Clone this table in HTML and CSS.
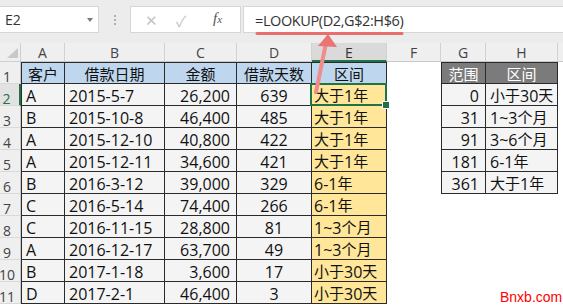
FILE: index.html
```html
<!DOCTYPE html>
<html lang="zh">
<head>
<meta charset="utf-8">
<title>LOOKUP</title>
<link rel="stylesheet" href="styles.css">
</head>
<body>
<div class="app">
  <div class="toolbar">
    <div class="namebox"><span class="nb-text">E2</span><span class="nb-arrow"></span></div>
    <div class="dots"><i></i><i></i><i></i></div>
    <div class="fxbox"><span class="fx-x">✕</span><span class="fx-ok">✓</span><span class="fx-fx"><i>f</i><i class="sub">x</i></span></div>
    <div class="formula">=LOOKUP(D2,G$2:H$6)</div>
  </div>

  <div class="sheet">
    <div class="corner"><span class="tri"></span></div>
    <div class="ch">A</div><div class="ch">B</div><div class="ch">C</div><div class="ch">D</div><div class="ch ch-sel">E</div><div class="ch">F</div><div class="ch">G</div><div class="ch">H</div><div class="ch ch-last"></div>

    <div class="rh">1</div>
    <div class="c hd first"><span class="z">客户</span></div>
    <div class="c hd"><span class="z">借款日期</span></div>
    <div class="c hd"><span class="z">金额</span></div>
    <div class="c hd"><span class="z">借款天数</span></div>
    <div class="c hd"><span class="z">区间</span></div>
    <div class="e"></div>
    <div class="c hd2 first"><span class="z">范围</span></div>
    <div class="c hd2"><span class="z">区间</span></div>
    <div class="e"></div>

    <div class="rh rh-sel">2</div>
    <div class="c d l first">A</div><div class="c d l">2015-5-7</div><div class="c d r">26,200</div><div class="c d m">639</div>
    <div class="c y sel"><span class="z">大于</span>1<span class="z">年</span></div>
    <div class="e"></div>
    <div class="c d r first">0</div><div class="c d l"><span class="z">小于</span>30<span class="z">天</span></div>
    <div class="e"></div>

    <div class="rh">3</div>
    <div class="c d l first">B</div><div class="c d l">2015-10-8</div><div class="c d r">46,400</div><div class="c d m">485</div>
    <div class="c y"><span class="z">大于</span>1<span class="z">年</span></div>
    <div class="e"></div>
    <div class="c d r first">31</div><div class="c d l">1~3<span class="z">个月</span></div>
    <div class="e"></div>

    <div class="rh">4</div>
    <div class="c d l first">A</div><div class="c d l">2015-12-10</div><div class="c d r">40,800</div><div class="c d m">422</div>
    <div class="c y"><span class="z">大于</span>1<span class="z">年</span></div>
    <div class="e"></div>
    <div class="c d r first">91</div><div class="c d l">3~6<span class="z">个月</span></div>
    <div class="e"></div>

    <div class="rh">5</div>
    <div class="c d l first">A</div><div class="c d l">2015-12-11</div><div class="c d r">34,600</div><div class="c d m">421</div>
    <div class="c y"><span class="z">大于</span>1<span class="z">年</span></div>
    <div class="e"></div>
    <div class="c d r first">181</div><div class="c d l">6-1<span class="z">年</span></div>
    <div class="e"></div>

    <div class="rh">6</div>
    <div class="c d l first">B</div><div class="c d l">2016-3-12</div><div class="c d r">39,000</div><div class="c d m">329</div>
    <div class="c y">6-1<span class="z">年</span></div>
    <div class="e"></div>
    <div class="c d r first">361</div><div class="c d l"><span class="z">大于</span>1<span class="z">年</span></div>
    <div class="e"></div>

    <div class="rh">7</div>
    <div class="c d l first">C</div><div class="c d l">2016-5-14</div><div class="c d r">74,400</div><div class="c d m">266</div>
    <div class="c y">6-1<span class="z">年</span></div>
    <div class="e"></div><div class="e"></div><div class="e"></div><div class="e"></div>

    <div class="rh">8</div>
    <div class="c d l first">C</div><div class="c d l">2016-11-15</div><div class="c d r">28,800</div><div class="c d m">81</div>
    <div class="c y">1~3<span class="z">个月</span></div>
    <div class="e"></div><div class="e"></div><div class="e"></div><div class="e"></div>

    <div class="rh">9</div>
    <div class="c d l first">A</div><div class="c d l">2016-12-17</div><div class="c d r">63,700</div><div class="c d m">49</div>
    <div class="c y">1~3<span class="z">个月</span></div>
    <div class="e"></div><div class="e"></div><div class="e"></div><div class="e"></div>

    <div class="rh">10</div>
    <div class="c d l first">B</div><div class="c d l">2017-1-18</div><div class="c d r">3,600</div><div class="c d m">17</div>
    <div class="c y"><span class="z">小于</span>30<span class="z">天</span></div>
    <div class="e"></div><div class="e"></div><div class="e"></div><div class="e"></div>

    <div class="rh">11</div>
    <div class="c d l first">D</div><div class="c d l">2017-2-1</div><div class="c d r">46,400</div><div class="c d m">3</div>
    <div class="c y"><span class="z">小于</span>30<span class="z">天</span></div>
    <div class="e"></div><div class="e"></div><div class="e"></div><div class="e"></div>
  </div>

  <svg class="annot" width="563" height="307" viewBox="0 0 563 307">
    <defs>
      <filter id="blur" x="-20%" y="-300%" width="140%" height="700%">
        <feGaussianBlur stdDeviation="2"/>
      </filter>
    </defs>
    <line x1="262" y1="39" x2="400" y2="39" stroke="#777" stroke-width="3" filter="url(#blur)" opacity="0.7"/>
    <line x1="257" y1="33.5" x2="402" y2="33.5" stroke="#e96f6f" stroke-width="3" stroke-linecap="round"/>
    <line x1="326" y1="43" x2="316" y2="92" stroke="#ef8c8c" stroke-width="4" stroke-linecap="round"/>
    <polygon points="328,34 318,46 337,47" fill="#ea7474"/>
  </svg>
  <div class="watermark">Bnxb.com</div>
</div>
</body>
</html>
```

FILE: styles.css
```css
* { box-sizing: border-box; }
html, body { margin: 0; padding: 0; }
body {
  width: 563px;
  height: 307px;
  overflow: hidden;
  background: #ffffff;
  font-family: "Open Sans", "Noto Sans CJK SC", sans-serif;
}
.app {
  position: relative;
  width: 563px;
  height: 307px;
}

/* ---------- formula toolbar ---------- */
.toolbar {
  display: flex;
  align-items: flex-start;
  height: 43px;
  padding-top: 6px;
  background: #ececec;
}
.namebox {
  position: relative;
  width: 99px;
  height: 27px;
  background: #fff;
  border: 1px solid #d6d6d6;
  border-left: none;
  display: flex;
  align-items: center;
  padding-left: 5px;
}
.nb-text {
  font-size: 14px;
  color: #333;
}
.nb-arrow {
  position: absolute;
  left: 87px;
  top: 11px;
  width: 0;
  height: 0;
  border-left: 3.5px solid transparent;
  border-right: 3.5px solid transparent;
  border-top: 4px solid #7a7a7a;
}
.dots {
  width: 31px;
  height: 27px;
  display: flex;
  flex-direction: column;
  align-items: center;
  justify-content: center;
  gap: 2px;
}
.dots i {
  display: block;
  width: 2px;
  height: 2px;
  background: #b0b0b0;
}
.fxbox {
  width: 111px;
  height: 27px;
  background: #fff;
  border: 1px solid #d6d6d6;
  display: flex;
  align-items: center;
  position: relative;
}
.fx-x {
  position: absolute;
  left: 14px;
  top: 3px;
  font-size: 15px;
  color: #c4c4c4;
}
.fx-ok {
  position: absolute;
  left: 45px;
  top: 3px;
  font-size: 15px;
  color: #c4c4c4;
}
.fx-fx {
  position: absolute;
  left: 82px;
  top: 3px;
  font-family: "Liberation Serif", serif;
  font-size: 15px;
  color: #555;
}
.fx-fx .sub { font-size: 11px; }
.formula {
  margin-left: 2px;
  flex: 1;
  height: 27px;
  background: #fff;
  border: 1px solid #d6d6d6;
  border-right: none;
  padding-left: 11px;
  display: flex;
  align-items: center;
  padding-top: 1px;
  font-family: "Open Sans", sans-serif;
  font-size: 14.5px;
  letter-spacing: -0.4px;
  color: #333;
}

/* ---------- sheet grid ---------- */
.sheet {
  display: grid;
  grid-template-columns: 21px 44px 100px 72px 75px 75px 54px 45px 72px 5px;
  grid-template-rows: 19px repeat(11, 22px);
  background: #fff;
  font-size: 16px;
  color: #111;
}
.corner {
  position: relative;
  background: #efefef;
  border-right: 1px solid #cfcfcf;
  border-bottom: 1px solid #cfcfcf;
}
.tri {
  position: absolute;
  left: 7px;
  top: 5px;
  width: 11px;
  height: 10px;
  background: #c8c8c8;
  clip-path: polygon(100% 0, 100% 100%, 0 100%);
}
.ch {
  background: #efefef;
  border-right: 1px solid #d2d2d2;
  border-bottom: 1px solid #c9c9c9;
  display: flex;
  align-items: center;
  justify-content: center;
  font-size: 14px;
  color: #444;
  padding-top: 1px;
}
.ch-sel {
  background: #dadada;
  border-bottom: 2px solid #217346;
  color: #333;
}
.ch-last { border-right: none; }

.rh {
  background: #efefef;
  border-right: 1px solid #c9c9c9;
  border-bottom: 1px solid #dadada;
  display: flex;
  align-items: center;
  justify-content: center;
  padding-right: 6px;
  padding-top: 8px;
  font-size: 14px;
  color: #444;
}
.rh-sel {
  background: #e2e2e2;
  color: #217346;
  border-right: 2px solid #217346;
}

.c {
  display: flex;
  align-items: center;
  white-space: nowrap;
  border-right: 1px solid #2a2a2a;
  border-bottom: 1px solid #2a2a2a;
  padding-top: 2px;
  line-height: 1;
}
.c.first { border-left: 1px solid #2a2a2a; }
.z { font-size: 15px; }

.hd {
  background: #bfd7ee;
  justify-content: center;
  border-top: 1px solid #2a2a2a;
}
.hd2 {
  background: #7b7b7b;
  color: #fff;
  justify-content: center;
  border-top: 1px solid #2a2a2a;
}
.d { background: #f4f4f4; }
.l { justify-content: flex-start; padding-left: 4px; }
.r { justify-content: flex-end; padding-right: 6px; }
.m { justify-content: center; }
.y {
  background: #ffe699;
  justify-content: flex-start;
  padding-left: 2px;
}
.sel { position: relative; }
.sel::after {
  content: "";
  position: absolute;
  left: -2px;
  top: -1px;
  right: -1px;
  bottom: -1px;
  border: 2px solid #217346;
}
.sel::before {
  content: "";
  position: absolute;
  right: -4px;
  bottom: -4px;
  width: 6px;
  height: 6px;
  background: #217346;
  border: 1px solid #fff;
  z-index: 2;
}
.e { background: #fff; }

/* ---------- overlays ---------- */
.annot {
  position: absolute;
  left: 0;
  top: 0;
  pointer-events: none;
}
.watermark {
  position: absolute;
  left: 500px;
  top: 289px;
  font-family: "Liberation Sans", Arial, sans-serif;
  font-size: 14px;
  color: #ff0000;
}
```
